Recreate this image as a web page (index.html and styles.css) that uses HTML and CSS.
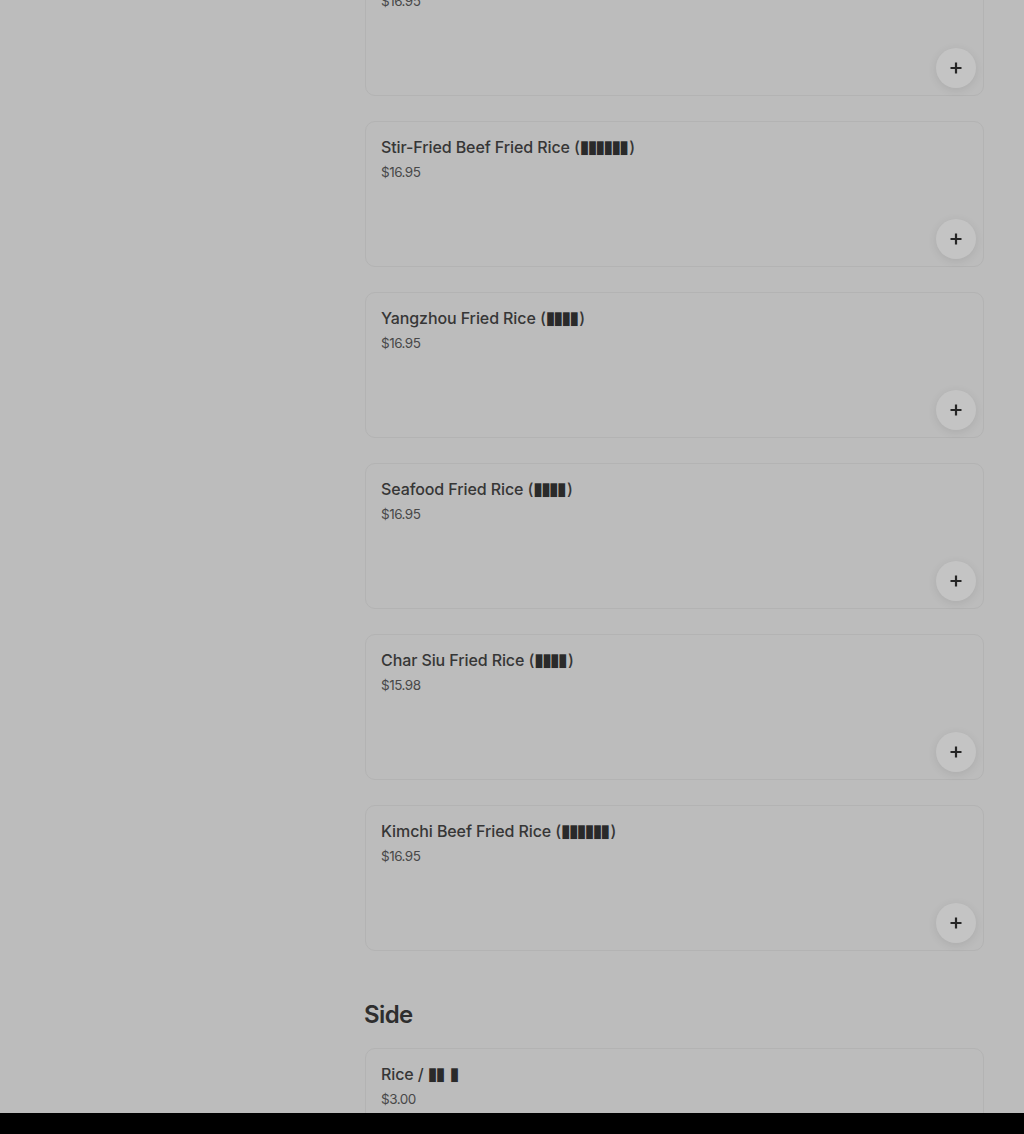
FILE: index.html
```html
<!DOCTYPE html>
<html>
  <head>
    <meta charset="UTF-8" />
    <meta name="viewport" content="width=device-width, initial-scale=1">
    <title>Menu</title>
    <link rel="stylesheet" href="styles.css">
  </head>
  <body>
    <main class="menu">
      <section class="menu-section menu-section--scrolled">
        <div class="item-list">
          <div class="item-card">
            <div class="item-name">Beef Fried Rice</div>
            <div class="item-price">$16.95</div>
            <button class="add-button" aria-label="Add">
              <svg viewBox="0 0 12 12" width="12" height="12"><path d="M6 0.5v11M0.5 6h11" stroke="currentColor" stroke-width="2.2"/></svg>
            </button>
          </div>
          <div class="item-card">
            <div class="item-name">Stir-Fried Beef Fried Rice (<span class="tofu">▮▮▮▮▮▮</span>)</div>
            <div class="item-price">$16.95</div>
            <button class="add-button" aria-label="Add">
              <svg viewBox="0 0 12 12" width="12" height="12"><path d="M6 0.5v11M0.5 6h11" stroke="currentColor" stroke-width="2.2"/></svg>
            </button>
          </div>
          <div class="item-card">
            <div class="item-name">Yangzhou Fried Rice (<span class="tofu">▮▮▮▮</span>)</div>
            <div class="item-price">$16.95</div>
            <button class="add-button" aria-label="Add">
              <svg viewBox="0 0 12 12" width="12" height="12"><path d="M6 0.5v11M0.5 6h11" stroke="currentColor" stroke-width="2.2"/></svg>
            </button>
          </div>
          <div class="item-card">
            <div class="item-name">Seafood Fried Rice (<span class="tofu">▮▮▮▮</span>)</div>
            <div class="item-price">$16.95</div>
            <button class="add-button" aria-label="Add">
              <svg viewBox="0 0 12 12" width="12" height="12"><path d="M6 0.5v11M0.5 6h11" stroke="currentColor" stroke-width="2.2"/></svg>
            </button>
          </div>
          <div class="item-card">
            <div class="item-name">Char Siu Fried Rice (<span class="tofu">▮▮▮▮</span>)</div>
            <div class="item-price">$15.98</div>
            <button class="add-button" aria-label="Add">
              <svg viewBox="0 0 12 12" width="12" height="12"><path d="M6 0.5v11M0.5 6h11" stroke="currentColor" stroke-width="2.2"/></svg>
            </button>
          </div>
          <div class="item-card">
            <div class="item-name">Kimchi Beef Fried Rice (<span class="tofu">▮▮▮▮▮▮</span>)</div>
            <div class="item-price">$16.95</div>
            <button class="add-button" aria-label="Add">
              <svg viewBox="0 0 12 12" width="12" height="12"><path d="M6 0.5v11M0.5 6h11" stroke="currentColor" stroke-width="2.2"/></svg>
            </button>
          </div>
        </div>
      </section>

      <section class="menu-section">
        <h2 class="section-title">Side</h2>
        <div class="item-list">
          <div class="item-card">
            <div class="item-name">Rice / <span class="tofu">▮▮</span> <span class="tofu">▮</span></div>
            <div class="item-price">$3.00</div>
            <button class="add-button" aria-label="Add">
              <svg viewBox="0 0 12 12" width="12" height="12"><path d="M6 0.5v11M0.5 6h11" stroke="currentColor" stroke-width="2.2"/></svg>
            </button>
          </div>
        </div>
      </section>
    </main>

    <div class="bottom-bar"></div>
  </body>
</html>
```

FILE: styles.css
```css
:root {
  --backdrop: #bcbcbc;
  --card-border: #b3b3b3;
  --text-main: #363636;
  --text-soft: #484848;
  --button-bg: #c4c4c4;
}

* {
  margin: 0;
  padding: 0;
  box-sizing: border-box;
}

body {
  font-family: 'Inter', 'Roboto', sans-serif;
  background: var(--backdrop);
  color: var(--text-main);
  height: 1134px;
  overflow: hidden;
}

.menu {
  width: 620px;
  margin-left: 364px;
}

.menu-section--scrolled {
  margin-top: -50px;
}

.item-list {
  display: flex;
  flex-direction: column;
  gap: 25px;
  padding-left: 1px;
}

.item-card {
  position: relative;
  height: 146px;
  border: 1px solid var(--card-border);
  border-radius: 10px;
  padding: 15px 15px;
}

.item-name {
  font-size: 16px;
  font-weight: 500;
  line-height: 20px;
  letter-spacing: -0.1px;
}

.tofu {
  font-family: 'DejaVu Sans', sans-serif;
  font-size: 18px;
  line-height: 1;
  letter-spacing: -2px;
  color: #2a2a2a;
  padding-right: 2px;
}

.item-price {
  margin-top: 6px;
  font-size: 13.5px;
  line-height: 18px;
  color: var(--text-soft);
  letter-spacing: -0.5px;
}

.add-button {
  position: absolute;
  right: 7px;
  bottom: 7px;
  width: 40px;
  height: 40px;
  border: none;
  border-radius: 50%;
  background: var(--button-bg);
  color: #262626;
  display: flex;
  align-items: center;
  justify-content: center;
  box-shadow: 0 2px 10px rgba(0, 0, 0, 0.09);
}

.section-title {
  margin-top: 48px;
  margin-bottom: 17px;
  font-size: 24px;
  font-weight: 600;
  line-height: 32px;
  letter-spacing: -0.6px;
  color: #2e2e2e;
}

.bottom-bar {
  position: fixed;
  left: 0;
  right: 0;
  bottom: 0;
  height: 21px;
  background: #000;
}
```
